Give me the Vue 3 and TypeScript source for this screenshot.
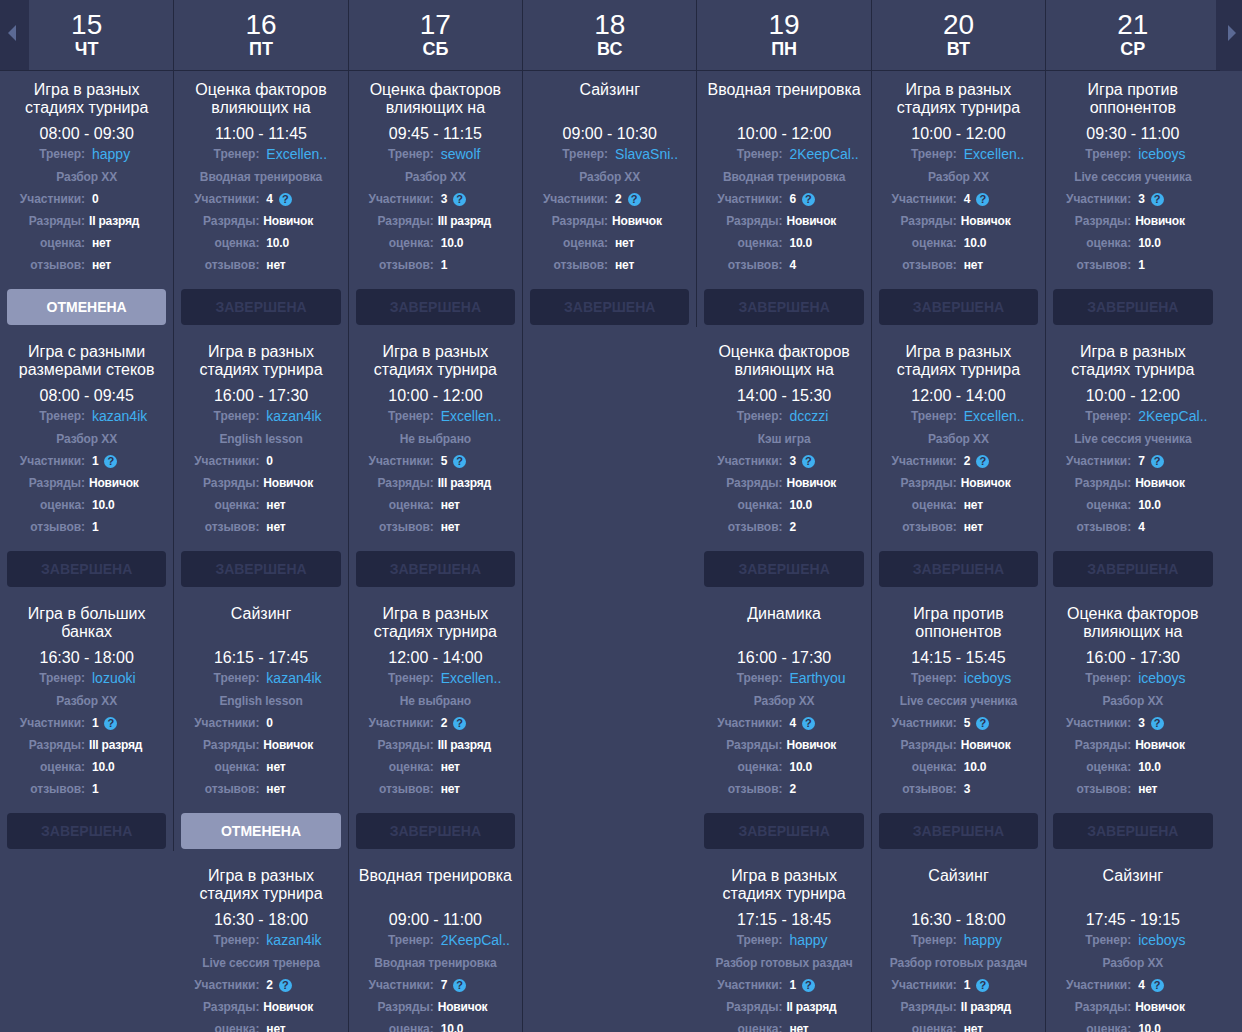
<script setup lang="ts">
interface Session {
  title: string;
  time: string;
  coach: string;
  kind: string;
  players: number;
  rank: string;
  score: string;
  reviews: string;
  status: "ЗАВЕРШЕНА" | "ОТМЕНЕНА";
}

interface Day {
  num: number;
  name: string;
  sessions: Session[];
}

const s = (
  title: string,
  time: string,
  coach: string,
  kind: string,
  players: number,
  rank: string,
  score: string,
  reviews: string,
  status: Session["status"] = "ЗАВЕРШЕНА",
): Session => ({ title, time, coach, kind, players, rank, score, reviews, status });

const STAGES = "Игра в разных стадиях турнира";
const FACTORS = "Оценка факторов влияющих на";
const OPPONENTS = "Игра против оппонентов";
const INTRO = "Вводная тренировка";
const REVIEW = "Разбор ХХ";
const READY = "Разбор готовых раздач";
const STUDENT = "Live сессия ученика";
const NOVICE = "Новичок";

const days: Day[] = [
  {
    num: 15,
    name: "ЧТ",
    sessions: [
      s(STAGES, "08:00 - 09:30", "happy", REVIEW, 0, "II разряд", "нет", "нет", "ОТМЕНЕНА"),
      s("Игра с разными размерами стеков", "08:00 - 09:45", "kazan4ik", REVIEW, 1, NOVICE, "10.0", "1"),
      s("Игра в больших банках", "16:30 - 18:00", "lozuoki", REVIEW, 1, "III разряд", "10.0", "1"),
    ],
  },
  {
    num: 16,
    name: "ПТ",
    sessions: [
      s(FACTORS, "11:00 - 11:45", "Excellen..", INTRO, 4, NOVICE, "10.0", "нет"),
      s(STAGES, "16:00 - 17:30", "kazan4ik", "English lesson", 0, NOVICE, "нет", "нет"),
      s("Сайзинг", "16:15 - 17:45", "kazan4ik", "English lesson", 0, NOVICE, "нет", "нет", "ОТМЕНЕНА"),
      s(STAGES, "16:30 - 18:00", "kazan4ik", "Live сессия тренера", 2, NOVICE, "нет", "нет"),
    ],
  },
  {
    num: 17,
    name: "СБ",
    sessions: [
      s(FACTORS, "09:45 - 11:15", "sewolf", REVIEW, 3, "III разряд", "10.0", "1"),
      s(STAGES, "10:00 - 12:00", "Excellen..", "Не выбрано", 5, "III разряд", "нет", "нет"),
      s(STAGES, "12:00 - 14:00", "Excellen..", "Не выбрано", 2, "III разряд", "нет", "нет"),
      s(INTRO, "09:00 - 11:00", "2KeepCal..", INTRO, 7, NOVICE, "10.0", "нет"),
    ],
  },
  {
    num: 18,
    name: "ВС",
    sessions: [s("Сайзинг", "09:00 - 10:30", "SlavaSni..", REVIEW, 2, NOVICE, "нет", "нет")],
  },
  {
    num: 19,
    name: "ПН",
    sessions: [
      s(INTRO, "10:00 - 12:00", "2KeepCal..", INTRO, 6, NOVICE, "10.0", "4"),
      s(FACTORS, "14:00 - 15:30", "dcczzi", "Кэш игра", 3, NOVICE, "10.0", "2"),
      s("Динамика", "16:00 - 17:30", "Earthyou", REVIEW, 4, NOVICE, "10.0", "2"),
      s(STAGES, "17:15 - 18:45", "happy", READY, 1, "II разряд", "нет", "нет"),
    ],
  },
  {
    num: 20,
    name: "ВТ",
    sessions: [
      s(STAGES, "10:00 - 12:00", "Excellen..", REVIEW, 4, NOVICE, "10.0", "нет"),
      s(STAGES, "12:00 - 14:00", "Excellen..", REVIEW, 2, NOVICE, "нет", "нет"),
      s(OPPONENTS, "14:15 - 15:45", "iceboys", STUDENT, 5, NOVICE, "10.0", "3"),
      s("Сайзинг", "16:30 - 18:00", "happy", READY, 1, "II разряд", "нет", "нет"),
    ],
  },
  {
    num: 21,
    name: "СР",
    sessions: [
      s(OPPONENTS, "09:30 - 11:00", "iceboys", STUDENT, 3, NOVICE, "10.0", "1"),
      s(STAGES, "10:00 - 12:00", "2KeepCal..", STUDENT, 7, NOVICE, "10.0", "4"),
      s(FACTORS, "16:00 - 17:30", "iceboys", REVIEW, 3, NOVICE, "10.0", "нет"),
      s("Сайзинг", "17:45 - 19:15", "iceboys", REVIEW, 4, NOVICE, "10.0", "нет"),
    ],
  },
];
</script>

<template>
  <div class="calendar">
    <button class="calendar__arrow calendar__arrow--prev" aria-label="Назад"></button>
    <button class="calendar__arrow calendar__arrow--next" aria-label="Вперёд"></button>

    <div class="calendar__grid">
      <section v-for="day in days" :key="day.num" class="day">
        <header class="day__head">
          <div class="day__num">{{ day.num }}</div>
          <div class="day__name">{{ day.name }}</div>
        </header>

        <div class="day__list">
          <article v-for="(item, i) in day.sessions" :key="i" class="card">
            <h3 class="card__title">{{ item.title }}</h3>
            <div class="card__time">{{ item.time }}</div>

            <div class="card__row card__row--coach">
              <span class="card__label">Тренер:</span>
              <span class="card__coach">{{ item.coach }}</span>
            </div>
            <div class="card__kind">{{ item.kind }}</div>
            <div class="card__row">
              <span class="card__label">Участники:</span>
              <span class="card__value">{{ item.players }}</span>
              <span v-if="item.players > 0" class="card__help">?</span>
            </div>
            <div class="card__row">
              <span class="card__label">Разряды:</span>
              <span class="card__value card__value--rank">{{ item.rank }}</span>
            </div>
            <div class="card__row">
              <span class="card__label">оценка:</span>
              <span class="card__value">{{ item.score }}</span>
            </div>
            <div class="card__row">
              <span class="card__label">отзывов:</span>
              <span class="card__value">{{ item.reviews }}</span>
            </div>

            <div
              class="card__status"
              :class="{ 'card__status--cancelled': item.status === 'ОТМЕНЕНА' }"
            >
              {{ item.status }}
            </div>
          </article>
        </div>
      </section>
    </div>
  </div>
</template>

<style>
html,
body {
  margin: 0;
  background: #3a4160;
}
</style>

<style scoped>
.calendar {
  position: relative;
  height: 1032px;
  overflow: hidden;
  background: #3a4160;
  font-family: "Liberation Sans", Arial, sans-serif;
}

.calendar__grid {
  position: relative;
  z-index: 1;
  display: grid;
  grid-template-columns: repeat(7, 1fr);
  align-items: start;
  width: 1220.5px;
}

.calendar__arrow {
  position: absolute;
  top: 0;
  height: 71px;
  padding: 0;
  border: none;
  background: #2b304d;
}

.calendar__arrow::after {
  content: "";
  position: absolute;
  top: 25px;
  border-top: 8.5px solid transparent;
  border-bottom: 8.5px solid transparent;
}

.calendar__arrow--prev {
  left: 0;
  width: 29px;
}

.calendar__arrow--prev::after {
  left: 8px;
  border-right: 8px solid #5b6994;
}

.calendar__arrow--next {
  right: 0;
  width: 26px;
}

.calendar__arrow--next::after {
  left: 12px;
  border-left: 8px solid #5b6994;
}

.day {
  box-sizing: border-box;
  border-right: 1px solid #23283f;
}

.day:last-child {
  border-right-color: transparent;
}

.day__head {
  box-sizing: border-box;
  height: 71px;
  padding-top: 10px;
  border-bottom: 1px solid #23283f;
  text-align: center;
  color: #fff;
}

.day__num {
  font-size: 28px;
  line-height: 30px;
}

.day__name {
  font-size: 18px;
  font-weight: 700;
  line-height: 18px;
}

.day__list {
  display: flex;
  flex-direction: column;
  gap: 6px;
}

.card {
  box-sizing: border-box;
  height: 256px;
  padding: 10px 7px 2px;
  text-align: center;
}

.card__title {
  min-height: 36px;
  margin: 0;
  font-size: 16px;
  font-weight: 400;
  line-height: 18px;
  color: #fff;
}

.card__time {
  margin-top: 6px;
  font-size: 16px;
  line-height: 21px;
  color: #fff;
}

.card__row {
  display: flex;
  align-items: center;
  height: 22px;
  font-size: 12px;
  text-align: left;
}

.card__row--coach {
  margin: -1px 0 1px;
}

.card__label {
  flex: none;
  box-sizing: border-box;
  width: 78px;
  font-weight: 700;
  letter-spacing: -0.05px;
  text-align: right;
  color: #7b84a8;
}

.card__coach {
  margin-left: 7px;
  font-size: 14px;
  color: #3fb0f0;
}

.card__value {
  margin-left: 7px;
  font-weight: 700;
  letter-spacing: -0.2px;
  color: #fff;
}

.card__value--rank {
  margin-left: 4px;
}

.card__help {
  width: 13px;
  height: 13px;
  margin-left: 6px;
  border-radius: 50%;
  background: #3fb0f0;
  font-size: 11px;
  font-weight: 700;
  line-height: 13px;
  text-align: center;
  color: #2c3250;
}

.card__kind {
  height: 22px;
  font-size: 12px;
  font-weight: 700;
  letter-spacing: -0.1px;
  line-height: 22px;
  color: #7b84a8;
}

.card__status {
  box-sizing: border-box;
  height: 36px;
  margin-top: 13px;
  border-radius: 4px;
  background: #222741;
  font-size: 14px;
  font-weight: 700;
  line-height: 36px;
  color: #343a5c;
}

.card__status--cancelled {
  background: #8f97b8;
  color: #fff;
}
</style>
